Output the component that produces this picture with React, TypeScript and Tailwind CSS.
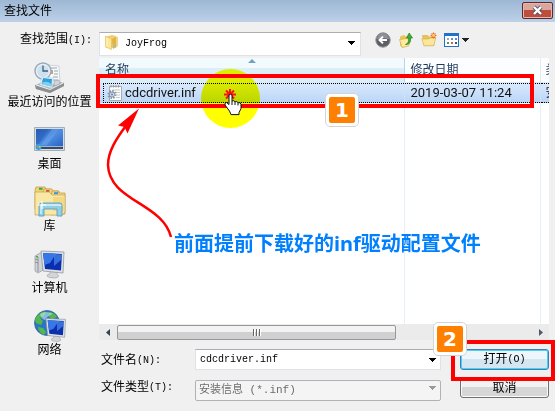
import React from 'react';

const UI = 'font-[Roboto,"Noto_Sans_CJK_SC",sans-serif]';
const SONG = 'font-["Liberation_Mono","Noto_Sans_CJK_SC",monospace]';

function Caret({ className = 'fill-black' }: { className?: string }) {
  return (
    <svg width="7" height="4" viewBox="0 0 7 4" className={className} shapeRendering="crispEdges" aria-hidden="true">
      <path d="M0 0h7v1H0zM1 1h5v1H1zM2 2h3v1H2zM3 3h1v1H3z" />
    </svg>
  );
}

function FolderIcon() {
  return (
    <svg width="16" height="16" viewBox="0 0 16 16" aria-hidden="true">
      <path d="M2 2.5 8 1l4 1v12H2z" fill="#f2cf67" />
      <path d="M8 5l5-2.5v10L9 15z" fill="#e2b344" />
      <path d="M12 2.5l2 .8v9l-2 1.2z" fill="#ecd48b" />
      <path d="M1.5 2l6 3v10.5l-6-2.5z" fill="#fbe795" stroke="#dcba58" strokeWidth=".6" />
      <path d="M9.5 10.5h1.5v3H9.5z" fill="#8dc6dc" />
      <path d="M3 4v9" stroke="#fff6c5" />
    </svg>
  );
}

function BackIcon() {
  return (
    <svg width="16" height="16" viewBox="0 0 16 16" aria-hidden="true">
      <circle cx="8" cy="8" r="7.2" fill="#5c5f64" stroke="#8d9095" />
      <path d="M2 7a6 6 0 0 1 12 0Q8 5.5 2 7z" fill="#8e9298" />
      <path d="M12 8H5M8 4.6 4.5 8 8 11.4" fill="none" stroke="#fff" strokeWidth="2" />
    </svg>
  );
}

function UpIcon() {
  return (
    <svg width="16" height="16" viewBox="0 0 16 16" aria-hidden="true">
      <path d="M2 4.5l4-1.5 2 1.5 4-.5v8l-7 3.5-3-2z" fill="#e9c55c" />
      <path d="M1.5 7.5l7.5-1 3.5 1-2 6.5-6.5 1.5z" fill="#fbeaa2" stroke="#d6ad46" strokeWidth=".7" />
      <path d="M7.5 12.5c3-1 3.3-3.500 3.200-6.500H8.500L11.200 1 14.500 6h-2c.3 4-1 6.500-5 6.500z" fill="#3fae36" stroke="#1f7f1c" strokeWidth=".7" />
    </svg>
  );
}

function NewFolderIcon() {
  return (
    <svg width="16" height="16" viewBox="0 0 16 16" aria-hidden="true">
      <path d="M1.500 3.500h5l1.500 1.500h5v8.500H3z" fill="#e8c35a" stroke="#d5ab45" strokeWidth=".6" />
      <path d="M.8 7h7l1-1h6l-2.300 7.800H3z" fill="#fbe79b" stroke="#dab450" strokeWidth=".7" />
      <path d="M12.500 .5v6M9.500 3.500h6M10.500 1.500l4 4M14.500 1.500l-4 4" stroke="#f0722d" strokeWidth="1.200" />
      <circle cx="12.500" cy="3.500" r="1.400" fill="#ffd080" />
    </svg>
  );
}

function ViewIcon() {
  return (
    <svg width="15" height="14" viewBox="0 0 15 14" shapeRendering="crispEdges" aria-hidden="true">
      <path fill="#2272cc" d="M0 0h15v14H0z" />
      <path fill="#fff" d="M1 3h13v10H1z" />
      <path fill="#9aa9bc" d="M3 5h2v2H3z" />
      <path fill="#5a8bd0" d="M7 5h2v2H7zM11 5h2v2h-2z" />
      <path fill="#4a9a56" d="M3 9h2v2H3z" />
      <path fill="#d6613a" d="M7 9h2v2H7z" />
      <path fill="#344f80" d="M11 9h2v2h-2z" />
    </svg>
  );
}

function InfIcon() {
  return (
    <svg width="16" height="16" viewBox="0 0 16 16" aria-hidden="true">
      <path d="M2.500 1.500h12v14h-12z" fill="#fbfbfb" stroke="#a9abad" />
      <path d="M4 0v2.500M6.500 0v2.500M9 0v2.500M11.500 0v2.500" stroke="#9b9fa3" />
      <path d="M5 5h8M9 7.500h4M10 10h3M9 12.500h4" stroke="#c6cacd" />
      <circle cx="5" cy="9.500" r="3.600" fill="none" stroke="#8198ad" strokeWidth="2" strokeDasharray="1.500 1.300" />
      <circle cx="5" cy="9.500" r="2.500" fill="#dce7f0" stroke="#7890a6" />
      <circle cx="5" cy="9.500" r="1" fill="#637d95" />
    </svg>
  );
}

function RecentIcon() {
  return (
    <svg width="32" height="32" viewBox="0 0 32 32" aria-hidden="true">
      <path d="M1 23l16-6 13 4v3l-14 7L2 27z" fill="#b4b8ba" />
      <path d="M1 23l15 4 14-6v3l-14 7L2 27z" fill="#8b8f91" />
      <path d="M2 23l14 4.500L29 21" fill="none" stroke="#eff1f2" />
      <path d="M14 3l11 1 1 17-11 2z" fill="#f7f9fa" stroke="#b4bec5" strokeWidth=".6" />
      <path d="M16 6h7M20 9h4M20 12h4M19 15h5M19 18h5" stroke="#92a8b8" />
      <path d="M16 8h3v4h-3z" fill="#d99d64" />
      <circle cx="9" cy="9" r="8" fill="#e9f2f8" stroke="#9aabba" strokeWidth="1.500" />
      <circle cx="9" cy="9" r="6" fill="#cce0ee" />
      <path d="M9 3.500V9h5" fill="none" stroke="#3a5f84" strokeWidth="1.300" />
      <path d="M8 15l11 1-1 10-12-3z" fill="#fff" stroke="#b7cad8" strokeWidth=".6" />
      <path d="M9 16l9 1-.6 7.500-10-2.500z" fill="#2e9fe0" />
      <path d="M7.500 21q5-3 10 1l-.3 2.700-10-2.500z" fill="#7ed0ee" />
      <path d="M20 19l5-1 1 4-6 2z" fill="#cfd5d8" stroke="#8e979d" strokeWidth=".5" />
    </svg>
  );
}

function DesktopIcon() {
  return (
    <svg width="32" height="32" viewBox="0 0 32 32" aria-hidden="true">
      <defs>
        <linearGradient id="desk" x1="0" y1="0" x2="1" y2="1">
          <stop offset="0" stopColor="#1f51ac" />
          <stop offset=".5" stopColor="#4d8ee4" />
          <stop offset="1" stopColor="#2459bb" />
        </linearGradient>
      </defs>
      <path d="M.5 3.500h30v23H.5z" fill="#d6dde3" stroke="#a3adb5" />
      <path d="M2 5h27v20H2z" fill="url(#desk)" />
      <path d="M2 5h13L5 20H2z" fill="#2c62bd" opacity=".6" />
      <path d="M18 5h7L13 21h-6z" fill="#78acee" opacity=".4" />
      <path d="M2 22h27v3H2z" fill="#344b69" />
      <path d="M7 22h22v1H7z" fill="#a2b7cd" />
      <circle cx="4.500" cy="23" r="3" fill="#3ca0d8" />
      <path d="M3 22h1.500v1.500H3z" fill="#f38232" />
      <path d="M5 22h1.500v1.500H5z" fill="#b9dd54" />
    </svg>
  );
}

function LibraryIcon() {
  return (
    <svg width="32" height="32" viewBox="0 0 32 32" aria-hidden="true">
      <path d="M1 4l1-3h9l1 2h5v20H1z" fill="#efd27a" stroke="#c5a04b" strokeWidth=".8" />
      <path d="M5 1.800h3.500v2H5z" fill="#3caa3c" />
      <path d="M9 6l1-3h8l1 2h6v18H9z" fill="#f4da86" stroke="#c5a04b" strokeWidth=".8" />
      <path d="M12 4h3.500v2H12z" fill="#d6542e" />
      <path d="M17 9l1-4h6l1 2h6v21l-14 1z" fill="#f3d580" stroke="#c5a04b" strokeWidth=".8" />
      <path d="M20 6.200h4v2h-4z" fill="#3b93d9" />
      <path d="M1 6h14l3 3h13v17l-3 3H1z" fill="#f9e8a5" stroke="#cba955" strokeWidth=".8" />
      <path d="M19 11h11v14H19z" fill="#f3d983" />
      <path d="M5 20q0-3 3-3h18q2 0 2 3v10h-5v-7H10v7H5z" fill="#91cfe7" stroke="#5a9fc0" strokeWidth=".9" />
      <path d="M7 28v-8q0-1 2-1h16q2 0 2 1" fill="none" stroke="#dcf3fb" strokeWidth="1.300" />
      <path d="M8 15v8M4 19h8" stroke="#fff" strokeWidth="1.200" />
    </svg>
  );
}

function MonitorShape() {
  return (
    <>
      <path d="M16 23h5l3 4q2 2-3 3-7 0-8-2 0-2 3-2z" fill="#d2d6d8" stroke="#a0a7ab" strokeWidth=".7" />
      <path d="M7 3l23 1-1 21-20-2z" fill="#dfe3e5" stroke="#8e989f" strokeWidth=".8" />
      <path d="M9 5l19 1-1 16.500L11 21z" fill="#0b2fae" />
      <path d="M9 5l13 .8L16 15l-5.500 2z" fill="#3977e6" />
      <path d="M20 6l8 .4-.4 5L20 18z" fill="#4c8bed" opacity=".7" />
    </>
  );
}

function ComputerIcon() {
  return (
    <svg width="32" height="32" viewBox="0 0 32 32" aria-hidden="true">
      <path d="M1 8l5-3 3 1v16l-5 3-3-2z" fill="#cfd3d5" stroke="#92999d" strokeWidth=".7" />
      <path d="M4 9v15M1 11l3 1M1 14l3 1" stroke="#7c858a" strokeWidth=".8" />
      <path d="M2 8h2v1.500H2z" fill="#3db83a" />
      <MonitorShape />
    </svg>
  );
}

function NetworkIcon() {
  return (
    <svg width="32" height="32" viewBox="0 0 32 32" aria-hidden="true">
      <circle cx="13" cy="13" r="12.500" fill="#2b76c2" stroke="#2b5f97" strokeWidth=".7" />
      <path d="M3 6q5-5 9-4l-2 4-4 2 3 3-2 4-5-2q-2-4 1-7zM16 2q5 1 7 5l-5 2-4-3zM4 17l5 1 3 4-2 3q-5-2-6-8z" fill="#53b749" />
      <path d="M6 4q6-4 13 0-5 1-8 6-4-1-5-6z" fill="#d7f0fa" opacity=".55" />
      <g transform="translate(6 6) scale(.85)">
        <MonitorShape />
      </g>
    </svg>
  );
}

const places = [
  { name: '最近访问的位置', Icon: RecentIcon },
  { name: '桌面', Icon: DesktopIcon },
  { name: '库', Icon: LibraryIcon },
  { name: '计算机', Icon: ComputerIcon },
  { name: '网络', Icon: NetworkIcon },
];

function FieldLabel({ htmlFor, text, keyName, className = '' }: { htmlFor: string; text: string; keyName: string; className?: string }) {
  return (
    <label htmlFor={htmlFor} className={`flex shrink-0 items-center text-[12px] ${className}`}>
      {text}
      <span className="text-[10px]">({keyName}):</span>
    </label>
  );
}

function Badge({ n, className }: { n: number; className: string }) {
  return (
    <div className={`absolute size-[34px] rounded-[5px] border border-[#d4d4d4] bg-white p-[3px] ${className}`}>
      <div className='flex h-full items-center justify-center rounded-[2px] bg-[#ff8000] font-["DejaVu_Sans",sans-serif] text-[20px] leading-none font-bold text-white'>
        {n}
      </div>
    </div>
  );
}

function Toolbar() {
  return (
    <div className={`flex h-[36px] items-center pt-1 ${SONG}`}>
      <FieldLabel htmlFor="folder" text="查找范围" keyName="I" className="w-[99px] pb-1 pl-5" />
      <div className="relative h-6 w-[262px]">
        <select id="folder" className="size-full appearance-none border border-[#dfe2e6] border-t-[#abadb3] bg-white pl-[25px] text-[10px] text-black outline-none">
          <option>JoyFrog</option>
        </select>
        <span className="pointer-events-none absolute top-1 left-[5px]"><FolderIcon /></span>
        <span className="pointer-events-none absolute top-[11px] right-[6px]"><Caret /></span>
      </div>
      <div className="ml-[14px] flex items-center gap-[7px] pb-1">
        <button type="button" aria-label="后退"><BackIcon /></button>
        <button type="button" aria-label="向上一级"><UpIcon /></button>
        <button type="button" aria-label="新建文件夹"><NewFolderIcon /></button>
        <button type="button" aria-label="查看" className="flex items-center gap-[3px]">
          <ViewIcon />
          <Caret className="fill-[#222]" />
        </button>
      </div>
    </div>
  );
}

function FileList() {
  return (
    <div className="flex h-[266px] overflow-hidden bg-white">
      <table className={`h-full w-full table-fixed border-collapse text-left ${UI}`}>
        <colgroup>
          <col className="w-[305px]" />
          <col className="w-[136px]" />
          <col />
        </colgroup>
        <thead>
          <tr className="h-6 text-[12px] text-[#1e395b]">
            <th className="relative border-r border-[#a9dbf3] bg-linear-to-b from-[#f3fafd] from-40% to-[#dceff8] to-40% p-0 pl-[6px] font-normal">
              <svg width="8" height="4" viewBox="0 0 8 4" className="absolute top-px left-[149px]" aria-hidden="true">
                <path d="M0 4 4 0l4 4z" fill="#6fa3c4" />
              </svg>
              名称
            </th>
            <th className="border-r border-[#dfeaf5] bg-[#fcfdfe] p-0 pl-[6px] font-normal">修改日期</th>
            <th className="overflow-hidden bg-[#fcfdfe] p-0 pl-[5px] font-normal whitespace-nowrap">类型</th>
          </tr>
        </thead>
        <tbody className="text-[13px] text-[#111]">
          <tr className="h-[21px] bg-linear-to-b from-[#dcebfc] to-[#b9d5f8]">
            <td className="border-r border-[#cfe2f8] p-0 pl-1">
              <div className="flex h-[20px] items-center gap-[2px] border-y border-l border-dotted border-black pl-[3px]">
                <InfIcon />
                cdcdriver.inf
              </div>
            </td>
            <td className="border-r border-[#cfe2f8] p-0">
              <div className="flex h-[20px] items-center border-y border-dotted border-black pl-[6px]">2019-03-07 11:24</div>
            </td>
            <td className="overflow-hidden p-0">
              <div className="flex h-[20px] items-center border-y border-dotted border-black pl-[5px] text-[12px] whitespace-nowrap">安装信息</div>
            </td>
          </tr>
          <tr>
            <td className="border-r border-[#e8f1fb]" />
            <td className="border-r border-[#e8f1fb]" />
            <td />
          </tr>
        </tbody>
      </table>
    </div>
  );
}

function ScrollBar() {
  return (
    <div className="flex h-4 items-center bg-[#ebebeb]">
      <button type="button" aria-label="向左滚动" className="flex w-[18px] justify-center">
        <svg width="4" height="7" viewBox="0 0 4 7" aria-hidden="true"><path d="M4 0v7L0 3.500z" fill="#35405a" /></svg>
      </button>
      <div className="flex h-[15px] w-[279px] items-center justify-center gap-px rounded-[2px] border border-[#979797] bg-linear-to-b from-[#f3f3f3] from-50% to-[#d0d0d3] to-50%">
        <i className="h-[7px] w-[2px] border-r border-white bg-[#666]" />
        <i className="h-[7px] w-[2px] border-r border-white bg-[#666]" />
        <i className="h-[7px] w-[2px] border-r border-white bg-[#666]" />
      </div>
      <button type="button" aria-label="向右滚动" className="mr-[6px] ml-auto">
        <svg width="4" height="7" viewBox="0 0 4 7" aria-hidden="true"><path d="M0 0v7l4-3.500z" fill="#50586b" /></svg>
      </button>
    </div>
  );
}

function FileForm() {
  return (
    <div className={`mt-[9px] flex flex-col gap-[7px] ${SONG}`}>
      <div className="flex items-center">
        <FieldLabel htmlFor="filename" text="文件名" keyName="N" className="w-24 pt-[2px] pl-[2px]" />
        <div className="flex h-[21px] min-w-0 flex-1 items-center border border-[#dfe2e6] border-t-[#abadb3] bg-white pr-1">
          <input id="filename" defaultValue="cdcdriver.inf" className="min-w-0 flex-1 bg-transparent pl-1 text-[10px] text-black outline-none" />
          <button type="button" aria-label="展开"><Caret /></button>
        </div>
        <button type="button" className="ml-[19px] flex h-[21px] w-[89px] items-center justify-center rounded-[3px] border border-[#3c7fb1] bg-linear-to-b from-[#eef6fb] from-50% to-[#d3e6f1] to-50% text-[12px] text-black ring-1 ring-[#48d0f5] ring-inset">
          打开<span className="text-[10px]">(O)</span>
        </button>
      </div>
      <div className="flex items-center">
        <FieldLabel htmlFor="filetype" text="文件类型" keyName="T" className="w-24 pl-[2px]" />
        <div className="relative h-[21px] min-w-0 flex-1">
          <select id="filetype" disabled className="size-full appearance-none rounded-[2px] border border-[#b0b3b5] bg-[#f4f4f4] pl-[3px] text-[11px] text-[#6d6d6d] opacity-100">
            <option>安装信息 (*.inf)</option>
          </select>
          <span className="pointer-events-none absolute top-[9px] right-[5px]"><Caret className="fill-[#9a9a9a]" /></span>
        </div>
        <button type="button" className="ml-[19px] h-[21px] w-[89px] rounded-[3px] border border-[#707070] bg-linear-to-b from-[#f2f2f2] from-50% to-[#d6d6d6] to-50% pt-[2px] text-[12px] leading-none text-black ring-1 ring-[#fafafa] ring-inset">
          取消
        </button>
      </div>
    </div>
  );
}

function Annotations() {
  return (
    <div className="pointer-events-none absolute inset-0">
      <div className="absolute top-[69px] left-[201px] size-[59px] rounded-full bg-[#ffff00] mix-blend-multiply" />
      <div className="absolute top-[74px] left-[96px] h-[34px] w-[438px] border-4 border-[#ff0000]" />
      <div className="absolute top-[340px] right-0 h-[41px] w-[104px] border-4 border-[#ff0000]" />
      <svg width="90" height="140" viewBox="100 105 90 140" className="absolute top-[105px] left-[100px]" aria-hidden="true">
        <path d="M171 237C163 203 109 201 108 165C108 151 117 138 125 127" fill="none" stroke="#ff0000" strokeWidth="2.500" />
        <path d="M139 108.500 118 125.500 124.500 127 127.500 133.500z" fill="#ff0000" />
      </svg>
      <svg width="26" height="30" viewBox="0 0 26 30" className="absolute top-[88px] left-[220px]" aria-hidden="true">
        <path d="M10 1v11M4 6.500h12M6 2.500l8 8M14 2.500l-8 8" stroke="#ff1010" strokeWidth="2" />
        <path d="M9 7q1.500-1.500 3 0v6q2-1 3 .8 2-.8 3 .8 3-.6 3 2v4l-2 4v2h-8l-1.500-3.500L5 17q-.5-2.500 1.500-2.500L9 16.500z" fill="#fff" stroke="#111" />
        <path d="M12 13v4M15 14v3M18 15v2.500" stroke="#111" />
      </svg>
      <Badge n={1} className="top-[93px] left-[325px]" />
      <Badge n={2} className="top-[322px] right-[88px]" />
      <p className='absolute top-[232px] left-[174px] font-["Noto_Sans","Noto_Sans_CJK_SC",sans-serif] text-[20px] leading-6 font-bold whitespace-nowrap text-[#0080ff]'>
        前面提前下载好的inf驱动配置文件
      </p>
    </div>
  );
}

export default function App() {
  return (
    <main className={`relative min-h-screen overflow-hidden bg-[#f0f0f0] text-black ${UI}`}>
      <header className="flex h-[22px] items-start justify-between bg-linear-to-b from-[#9db7d4] to-[#bdd1e8] pr-[2px] pl-1">
        <h1 className="text-[12px] leading-[22px] font-normal">查找文件</h1>
        <button type="button" aria-label="关闭" className="mt-[2px] flex h-[17px] w-[31px] items-center justify-center rounded-[2px] border border-[#5d2b2b] bg-linear-to-b from-[#dba79c] from-45% to-[#bd4d3c] to-45% ring-1 ring-[#e6b5ac] ring-inset">
          <svg width="13" height="11" viewBox="0 0 13 11" aria-hidden="true">
            <path d="M3 2l7 7M10 2 3 9" stroke="#50576a" strokeWidth="4" />
            <path d="M3 2l7 7M10 2 3 9" stroke="#fff" strokeWidth="2.400" />
          </svg>
        </button>
      </header>
      <Toolbar />
      <div className="flex pr-[6px]">
        <nav className="flex w-[99px] shrink-0 flex-col gap-[14px] pt-1">
          {places.map(({ name, Icon }) => (
            <button key={name} type="button" className="flex flex-col items-center text-[12px] leading-4 whitespace-nowrap">
              <Icon />
              {name}
            </button>
          ))}
        </nav>
        <section className="min-w-0 flex-1">
          <FileList />
          <ScrollBar />
          <FileForm />
        </section>
      </div>
      <Annotations />
    </main>
  );
}
